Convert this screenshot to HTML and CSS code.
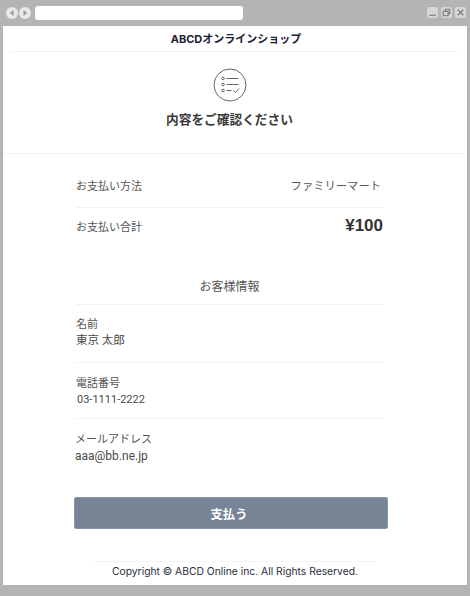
FILE: index.html
```html
<!DOCTYPE html>
<html lang="ja">

<head>
    <meta charset="UTF-8">
    <title>ABCDオンラインショップ</title>
    <link rel="stylesheet" href="styles.css">
</head>

<body>
    <div class="window">
        <div class="titlebar">
            <div class="nav-btns">
                <span class="nav-btn"><svg viewBox="0 0 12 12"><path d="M7.500 3 4 6l3.500 3z" /></svg></span>
                <span class="nav-btn"><svg viewBox="0 0 12 12"><path d="M4.500 3 8 6l-3.500 3z" /></svg></span>
            </div>
            <div class="address"></div>
            <div class="win-btns">
                <span class="win-btn"><svg viewBox="0 0 10 10"><path d="M2 7.500h6" /></svg></span>
                <span class="win-btn"><svg viewBox="0 0 10 10"><path d="M2 4h4.500v4H2zM4 4V2h4v4H6.500" /></svg></span>
                <span class="win-btn"><svg viewBox="0 0 10 10"><path d="m2.500 2.500 5 5m0-5-5 5" /></svg></span>
            </div>
        </div>

        <div class="page">
            <header class="shop-header">ABCDオンラインショップ</header>

            <section class="confirm">
                <svg class="confirm-icon" viewBox="0 0 34 34">
                    <circle cx="17" cy="17" r="16" />
                    <circle cx="10" cy="10.500" r="1.300" />
                    <circle cx="10" cy="16.500" r="1.300" />
                    <circle cx="10" cy="22.500" r="1.300" />
                    <path d="M13.500 10.500h12M13.500 16.500h12M13.500 22.500h5M20.500 22.500l2 2 3.500-4" />
                </svg>
                <h1 class="confirm-title">内容をご確認ください</h1>
            </section>

            <main class="content">
                <div class="pay-row">
                    <span class="pay-label">お支払い方法</span>
                    <span class="pay-value">ファミリーマート</span>
                </div>
                <div class="pay-row total">
                    <span class="pay-label">お支払い合計</span>
                    <span class="pay-total">¥100</span>
                </div>

                <h2 class="customer-title">お客様情報</h2>

                <div class="info name">
                    <div class="info-label">名前</div>
                    <div class="info-value">東京 太郎</div>
                </div>
                <div class="info phone">
                    <div class="info-label">電話番号</div>
                    <div class="info-value">03-1111-2222</div>
                </div>
                <div class="info mail">
                    <div class="info-label">メールアドレス</div>
                    <div class="info-value">aaa@bb.ne.jp</div>
                </div>

                <button class="pay-btn">支払う</button>
            </main>

            <footer class="copyright">Copyright © ABCD Online inc. All Rights Reserved.</footer>
        </div>
    </div>
</body>

</html>
```

FILE: styles.css
```css
* {
    box-sizing: border-box;
}

html,
body {
    margin: 0;
    height: 100%;
}

body {
    background-color: #fff;
    font-family: Roboto, "Noto Sans CJK JP", sans-serif;
    color: #555;
    overflow: hidden;
}

.window {
    width: 470px;
    height: 596px;
    display: flex;
    flex-direction: column;
    background-color: #b4b4b4;
    padding: 0 3px 11px 3px;
}

.titlebar {
    height: 26px;
    flex: none;
    display: flex;
    align-items: center;
    padding-bottom: 1px;
}

.nav-btns {
    display: flex;
    gap: 1px;
    margin-left: 3px;
}

.nav-btn {
    width: 12px;
    height: 12px;
    border-radius: 50%;
    background-color: #e8e8e8;
}

.nav-btn svg {
    display: block;
    fill: #9a9a9a;
}

.address {
    width: 208px;
    height: 14px;
    margin-left: 4px;
    border-radius: 3px;
    background-color: #fff;
}

.win-btns {
    display: flex;
    gap: 3px;
    margin-left: auto;
    margin-right: 1px;
}

.win-btn {
    width: 11px;
    height: 11px;
    border-radius: 2px;
    background-color: #d6d6d6;
}

.win-btn svg {
    display: block;
    fill: none;
    stroke: #777;
    stroke-width: 1;
}

.page {
    flex: 1;
    display: flex;
    flex-direction: column;
    background-color: #fff;
}

.shop-header {
    margin: 0 7px;
    height: 26px;
    padding: 3px 0 0 2px;
    border-bottom: 1px solid #f1f3f8;
    text-align: center;
    font-family: Inter, "Noto Sans CJK JP", sans-serif;
    font-size: 11px;
    line-height: 21px;
    font-weight: 700;
    color: #1d2233;
}

.confirm {
    height: 102px;
    border-bottom: 1px solid #f1f3f8;
    display: flex;
    flex-direction: column;
    align-items: center;
    padding: 16px 11px 0 0;
}

.confirm-icon {
    width: 34px;
    height: 34px;
    fill: none;
    stroke: #666;
    stroke-width: 1;
}

.confirm-title {
    margin: 8px 0 0;
    font-size: 12.700px;
    line-height: 20px;
    font-weight: 700;
    color: #3a3a3a;
}

.content {
    margin-left: 73px;
    width: 307px;
}

.pay-row {
    display: flex;
    justify-content: space-between;
    align-items: center;
    height: 54px;
    border-bottom: 1px solid #f0f2f8;
    padding-top: 8px;
    font-size: 11px;
}

.pay-row.total {
    height: 38px;
    border-bottom: 0;
    padding: 0 0 2px;
}

.pay-value {
    font-size: 11.300px;
    padding-right: 2px;
}

.pay-total {
    font-family: "Liberation Sans", sans-serif;
    font-size: 17px;
    font-weight: 700;
    color: #333;
}

.customer-title {
    margin: 0;
    height: 59px;
    padding-top: 32px;
    border-bottom: 1px solid #f0f2f8;
    text-align: center;
    font-size: 12px;
    line-height: 18px;
    font-weight: 400;
    color: #555;
}

.info {
    border-bottom: 1px solid #f0f2f8;
    font-size: 11px;
    line-height: 16px;
}

.info.name {
    height: 58px;
    padding-top: 12px;
}

.info.phone {
    height: 56px;
    padding-top: 13px;
}

.info.mail {
    height: 55px;
    padding-top: 13px;
    border-bottom: 0;
}

.info-label {
    color: #555;
}

.info-value {
    margin-top: -1px;
    font-size: 11.500px;
    color: #4a4a4a;
}

.phone .info-value {
    margin-top: 0;
    padding-left: 1px;
    font-size: 11px;
}

.mail .info-label {
    margin-left: -1px;
}

.mail .info-value {
    margin-top: 0;
    margin-left: -1px;
    font-size: 12px;
}

.pay-btn {
    display: block;
    width: 314px;
    height: 32px;
    margin: 23px 0 0 -2px;
    padding: 1px 4px 0 0;
    border: 1px solid #8a97a8;
    border-radius: 2px;
    background-color: #788597;
    font-family: inherit;
    font-size: 12.300px;
    font-weight: 700;
    color: #fff;
}

.copyright {
    margin: 32px 0 0 90px;
    width: 284px;
    border-top: 1px solid #f3f4f9;
    text-align: center;
    font-family: Inter, "Noto Sans CJK JP", sans-serif;
    font-size: 10.300px;
    line-height: 19px;
    color: #2a2e3a;
}
```
